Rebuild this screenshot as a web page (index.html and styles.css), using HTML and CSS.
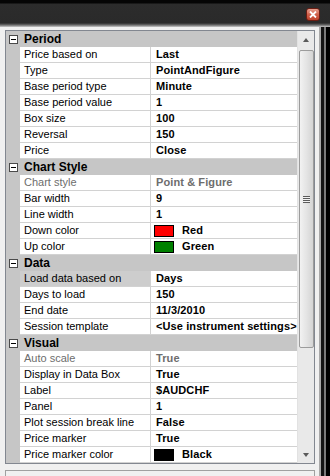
FILE: index.html
```html
<!DOCTYPE html>
<html lang="en">

<head>
  <meta charset="UTF-8">
  <title>Properties</title>
  <link rel="stylesheet" href="styles.css">
</head>

<body>
  <div class="window">
    <!-- title bar -->
    <div class="titlebar">
      <div class="close">
        <svg width="8" height="7" viewBox="0 0 8 7">
          <path d="M1 0.5 L7 6.5 M7 0.5 L1 6.5" stroke="#fff" stroke-width="1.8" fill="none" />
        </svg>
      </div>
    </div>

    <div class="main">
      <div class="panel">
        <div class="grid">
          <div class="rows">
            <div class="row cat"><div class="g"><span class="tog"></span></div><div class="k">Period</div></div>
            <div class="row"><div class="g"></div><div class="k">Price based on</div><div class="v">Last</div></div>
            <div class="row"><div class="g"></div><div class="k">Type</div><div class="v">PointAndFigure</div></div>
            <div class="row"><div class="g"></div><div class="k">Base period type</div><div class="v">Minute</div></div>
            <div class="row"><div class="g"></div><div class="k">Base period value</div><div class="v">1</div></div>
            <div class="row"><div class="g"></div><div class="k">Box size</div><div class="v">100</div></div>
            <div class="row"><div class="g"></div><div class="k">Reversal</div><div class="v">150</div></div>
            <div class="row"><div class="g"></div><div class="k">Price</div><div class="v">Close</div></div>

            <div class="row cat"><div class="g"><span class="tog"></span></div><div class="k">Chart Style</div></div>
            <div class="row off"><div class="g"></div><div class="k">Chart style</div><div class="v">Point &amp; Figure</div></div>
            <div class="row"><div class="g"></div><div class="k">Bar width</div><div class="v">9</div></div>
            <div class="row"><div class="g"></div><div class="k">Line width</div><div class="v">1</div></div>
            <div class="row"><div class="g"></div><div class="k">Down color</div><div class="v"><span class="sw red"></span>Red</div></div>
            <div class="row"><div class="g"></div><div class="k">Up color</div><div class="v"><span class="sw green"></span>Green</div></div>

            <div class="row cat"><div class="g"><span class="tog"></span></div><div class="k">Data</div></div>
            <div class="row sel"><div class="g"></div><div class="k">Load data based on</div><div class="v">Days</div></div>
            <div class="row"><div class="g"></div><div class="k">Days to load</div><div class="v">150</div></div>
            <div class="row"><div class="g"></div><div class="k">End date</div><div class="v">11/3/2010</div></div>
            <div class="row"><div class="g"></div><div class="k">Session template</div><div class="v">&lt;Use instrument settings&gt;</div></div>

            <div class="row cat"><div class="g"><span class="tog"></span></div><div class="k">Visual</div></div>
            <div class="row off"><div class="g"></div><div class="k">Auto scale</div><div class="v">True</div></div>
            <div class="row"><div class="g"></div><div class="k">Display in Data Box</div><div class="v">True</div></div>
            <div class="row"><div class="g"></div><div class="k">Label</div><div class="v">$AUDCHF</div></div>
            <div class="row"><div class="g"></div><div class="k">Panel</div><div class="v">1</div></div>
            <div class="row"><div class="g"></div><div class="k">Plot session break line</div><div class="v">False</div></div>
            <div class="row"><div class="g"></div><div class="k">Price marker</div><div class="v">True</div></div>
            <div class="row"><div class="g"></div><div class="k">Price marker color</div><div class="v"><span class="sw black"></span>Black</div></div>
          </div>

          <!-- scrollbar -->
          <div class="sbar">
            <div class="arrow up"></div>
            <div class="thumb"><span class="grip"></span></div>
            <div class="arrow down"></div>
          </div>
        </div>
        <div class="desc"></div>
      </div>
      <div class="frame"></div>
    </div>
  </div>
</body>

</html>
```

FILE: styles.css
```css
* {
  padding: 0;
  margin: 0;
  box-sizing: border-box;
}

body {
  width: 330px;
  height: 476px;
  overflow: hidden;
  background-color: #f0f0f0;
  font-family: "Liberation Sans", Arial, sans-serif;
  font-size: 11px;
  color: #000000;
}

.window {
  display: flex;
  flex-direction: column;
  height: 476px;
}

.titlebar {
  height: 27px;
  display: flex;
  justify-content: flex-end;
  align-items: flex-start;
  padding: 8px 10px 0 0;
  background: linear-gradient(#050505 0, #050505 3px, #2c2c2c 4px, #2a2a2a 23px, #6a6a6a 25px, #c8c8c8 27px);
}

.close {
  width: 14px;
  height: 13px;
  border: 1px solid #6b1d12;
  border-radius: 3px;
  background: linear-gradient(#e9a393, #d0604a 50%, #c0432c);
  display: flex;
  justify-content: center;
  align-items: center;
}

.main {
  flex: 1;
  display: flex;
}

.panel {
  flex: 1;
  padding: 3px 0 0 5px;
  display: flex;
  flex-direction: column;
}

.grid {
  display: flex;
  border: 1px solid #828790;
  background-color: #ffffff;
}

.rows {
  width: 291px;
}

.row {
  display: flex;
  height: 16px;
  line-height: 15px;
}

.row .g {
  width: 14px;
  background-color: #c6c6c6;
  display: flex;
  align-items: center;
}

.row .k {
  width: 131px;
  padding-left: 4px;
  border-right: 1px solid #d2d2d2;
  border-bottom: 1px solid #d2d2d2;
  white-space: nowrap;
  overflow: hidden;
}

.row .v {
  width: 146px;
  padding-left: 5px;
  border-bottom: 1px solid #d2d2d2;
  font-weight: bold;
  letter-spacing: 0.1px;
  white-space: nowrap;
  overflow: hidden;
  display: flex;
  align-items: center;
}

/* category header */
.row.cat {
  background-color: #c6c6c6;
}

.row.cat .k {
  width: 277px;
  border: none;
  font-weight: bold;
  font-size: 12px;
  line-height: 16px;
}

.tog {
  width: 9px;
  height: 9px;
  margin-left: 3px;
  border: 1px solid #4a4a4a;
  background-color: #ffffff;
  display: flex;
  justify-content: center;
  align-items: center;
}

.tog::after {
  content: "";
  width: 5px;
  height: 1px;
  background-color: #000000;
}

.row.off .k,
.row.off .v {
  color: #6d6d6d;
}

.row.sel .k {
  background-color: #cdcdcd;
}

.sw {
  width: 20px;
  height: 12px;
  flex: none;
  border: 1px solid #000000;
  margin: 0 8px 0 -2px;
}

.sw.red {
  background-color: #ff0000;
}

.sw.green {
  background-color: #008000;
}

.sw.black {
  background-color: #000000;
}

/* scrollbar */
.sbar {
  width: 17px;
  display: flex;
  flex-direction: column;
  align-items: center;
  background-color: #e9e9e9;
  border-left: 1px solid #e2e2e2;
}

.arrow {
  width: 17px;
  height: 17px;
  display: flex;
  justify-content: center;
  align-items: center;
}

.arrow::after {
  content: "";
  border-left: 3px solid transparent;
  border-right: 3px solid transparent;
}

.arrow.up::after {
  border-bottom: 4px solid #5a5a5a;
}

.arrow.down {
  margin-top: auto;
}

.arrow.down::after {
  border-top: 4px solid #5a5a5a;
}

.thumb {
  width: 15px;
  height: 298px;
  margin-top: 2px;
  border: 1px solid #9c9c9c;
  border-radius: 2px;
  background: linear-gradient(to right, #f2f2f2, #e4e4e4 50%, #d4d4d4);
  display: flex;
  justify-content: center;
  align-items: center;
}

.grip {
  width: 7px;
  height: 7px;
  background: repeating-linear-gradient(#5c5c5c 0, #5c5c5c 1px, #f2f2f2 1px, #f2f2f2 2px);
}

.desc {
  flex: 1;
  margin-top: 6px;
  border: 1px solid #a0a0a0;
  border-bottom: none;
}

.frame {
  width: 15px;
  background: linear-gradient(to right, #f0f0f0 0, #f0f0f0 4px, #a8a8a8 4px, #a8a8a8 6px, #141414 6px, #141414 9px, #7a7a7a 9px, #7a7a7a 11px, #000000 11px);
}
```
